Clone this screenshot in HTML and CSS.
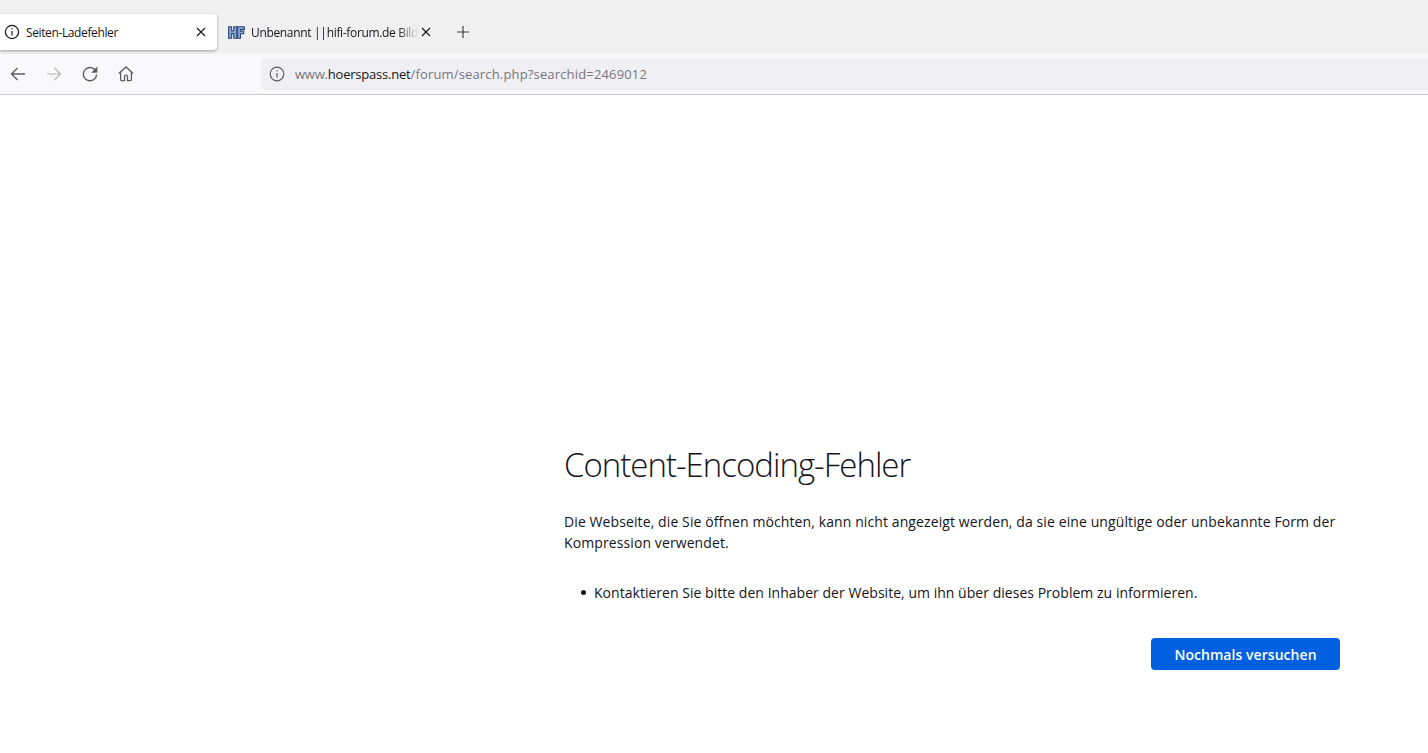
FILE: index.html
```html
<!DOCTYPE html>
<html lang="de">
<head>
<meta charset="utf-8">
<title>Seiten-Ladefehler</title>
<link rel="stylesheet" href="styles.css">
</head>
<body>
<header class="chrome">
  <div class="tabstrip">
    <div class="tab tab-active">
      <svg class="tab-icon" viewBox="0 0 16 16" width="16" height="16" fill="none" stroke="#15141a" stroke-width="1.2"><circle cx="8" cy="8" r="6.6"/><path d="M8 7v4.6"/><path d="M8 4.2v1.4"/></svg>
      <span class="tab-title">Seiten-Ladefehler</span>
      <svg class="tab-close" viewBox="0 0 10 10" width="10" height="10" stroke="#15141a" stroke-width="1.1"><path d="M1 1l8 8M9 1l-8 8"/></svg>
    </div>
    <div class="tab tab-other">
      <svg class="favicon" viewBox="0 0 17 13" width="17" height="13" fill="#8aa5cf" stroke="#2a4a80" stroke-width="1.1"><path d="M.6.8h3v4h2.2v-4h3v11.4h-3V7.6H3.6v4.6h-3z"/><path d="M9.6.8h6.8v2.8h-3.9v1.6h3.2v2.6h-3.2v4.4H9.6z"/></svg>
      <span class="tab-title tab-title-fade">Unbenannt <span class="pipe">|</span> <span class="pipe">|</span> hifi-forum.de Bild</span>
      <svg class="tab-close-other" viewBox="0 0 10 10" width="10" height="10" stroke="#15141a" stroke-width="1.1"><path d="M1 1l8 8M9 1l-8 8"/></svg>
    </div>
    <svg class="new-tab" viewBox="0 0 14 14" width="14" height="14" stroke="#3f3e45" stroke-width="1.2"><path d="M7 1v12M1 7h12"/></svg>
  </div>
  <div class="toolbar">
    <div class="nav">
      <svg viewBox="0 0 16 16" width="16" height="16" fill="none" stroke="#5b5b66" stroke-width="1.3"><path d="M15 8H1.5M7.5 2L1.5 8l6 6"/></svg>
      <svg viewBox="0 0 16 16" width="16" height="16" fill="none" stroke="#b5b4b8" stroke-width="1.2"><path d="M1 8h13.5M8.5 2l6 6-6 6"/></svg>
      <svg viewBox="0 0 16 16" width="16" height="16" fill="none" stroke="#5b5b66" stroke-width="1.4"><path d="M14.6 8.5A6.6 6.6 0 1 1 12 2.9L14 5"/><path d="M15.4.6v6.2H9.2z" fill="#5b5b66" stroke="none"/></svg>
      <svg viewBox="0 0 16 16" width="16" height="16" fill="none" stroke="#5b5b66" stroke-width="1.3"><path d="M.9 7.6L8 1l7.1 6.6M2.6 6.4v7.2q0 1 1 1h2.9V10.6q0-1.4 1.5-1.4t1.5 1.4v4h2.9q1 0 1-1V6.4"/></svg>
    </div>
    <div class="urlbar">
      <svg class="url-icon" viewBox="0 0 16 16" width="16" height="16" fill="none" stroke="#5b5b66" stroke-width="1.2"><circle cx="8" cy="8" r="6.8"/><path d="M8 7v4.6"/><path d="M8 4.2v1.4"/></svg>
      <span class="url"><span class="url-dim">www.</span><span class="url-host">hoerspass.net</span><span class="url-path">/forum/search.php?searchid=2469012</span></span>
    </div>
  </div>
</header>
<main class="page">
  <div class="error">
    <h1 class="error-title">Content-Encoding-Fehler</h1>
    <p class="error-text">Die Webseite, die Sie öffnen möchten, kann nicht angezeigt werden, da sie eine ungültige oder unbekannte Form der Kompression verwendet.</p>
    <ul class="error-list">
      <li class="error-item">Kontaktieren Sie bitte den Inhaber der Website, um ihn über dieses Problem zu informieren.</li>
    </ul>
    <div class="actions"><button class="retry">Nochmals versuchen</button></div>
  </div>
</main>
</body>
</html>
```

FILE: styles.css
```css
html, body { margin: 0; padding: 0; height: 100%; background: #fff; overflow: hidden; }
body { font-family: "Open Sans", "Noto Sans", sans-serif; color: #15141a; }
.chrome { display: flex; flex-direction: column; }
.tabstrip { height: 54px; background: #f0f0f1; display: flex; align-items: center; box-sizing: border-box; padding-top: 14px; padding-bottom: 4px; overflow: hidden; }
.tab { display: flex; align-items: center; height: 36px; box-sizing: border-box; font-size: 12px; }
.tab-active { width: 217px; background: #fff; border-radius: 0 4px 4px 0; box-shadow: 0 1px 3px rgba(0,0,0,.35); padding-left: 4px; padding-right: 11px; }
.tab-icon { flex: none; }
.tab-title { margin-left: 6px; flex: 1; white-space: nowrap; letter-spacing: -.38px; }
.tab-close { flex: none; }
.tab-other { width: 214px; padding-left: 11px; }
.favicon { flex: none; }
.tab-title-fade { margin-left: 6px; flex: none; width: 170px; letter-spacing: -.34px; -webkit-mask-image: linear-gradient(to right, #000 146px, transparent 168px); mask-image: linear-gradient(to right, #000 146px, transparent 168px); }
.pipe { letter-spacing: -3px; }
.tab-close-other { flex: none; margin-left: 0; }
.new-tab { flex: none; margin-left: 25px; }
.toolbar { height: 41px; background: #f9f9fb; border-bottom: 1px solid #c8c8cb; box-sizing: border-box; display: flex; align-items: center; padding-bottom: 1px; }
.nav { width: 261px; flex: none; display: flex; align-items: center; gap: 20px; padding-left: 10px; box-sizing: border-box; }
.urlbar { flex: 1; height: 32px; background: #f0f0f4; border-radius: 4px 0 0 4px; display: flex; align-items: center; padding-left: 8px; }
.url-icon { flex: none; }
.url { margin-left: 10px; padding-top: 1px; font-size: 13px; white-space: nowrap; }
.url-dim { color: #77767c; letter-spacing: -.2px; }
.url-host { color: #15141a; letter-spacing: -.22px; }
.url-path { color: #77767c; letter-spacing: .16px; }
.page { padding: 347px 88px 0 564px; }
.error-title { margin: 0; font-size: 33px; font-weight: 300; line-height: 46px; color: #15141a; letter-spacing: -1px; }
.error-text { margin: 23px 0 0; font-size: 14px; line-height: 21px; letter-spacing: .1px; }
.error-list { margin: 29px 0 0; padding: 0 0 0 17px; font-size: 14px; line-height: 21px; letter-spacing: .03px; list-style: none; }
.error-item { display: flex; align-items: center; gap: 8px; }
.error-item::before { content: ""; flex: none; width: 5px; height: 5px; border-radius: 50%; background: #15141a; }
.actions { display: flex; justify-content: flex-end; margin-top: 35px; }
.retry { width: 189px; height: 32px; border: 0; border-radius: 4px; background: #0060df; color: #fff; font-family: inherit; font-size: 14px; font-weight: 600; padding: 0; letter-spacing: .05px; }
```
